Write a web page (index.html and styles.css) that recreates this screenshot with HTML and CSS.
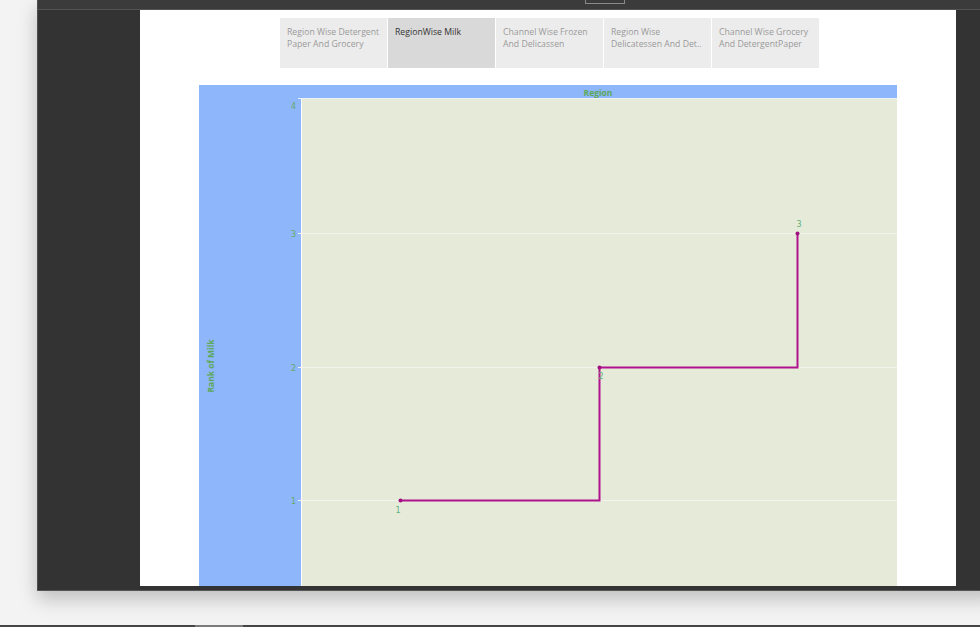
FILE: index.html
```html
<!DOCTYPE html>
<html>
<head>
<meta charset="utf-8">
<link rel="stylesheet" href="styles.css">
</head>
<body>
<div class="desk">
  <div class="window">
    <div class="titlebar"><span class="tabstub"></span></div>
    <div class="winbody">
      <div class="gutter"></div>
      <div class="panel">
        <div class="tabs">
          <div class="tab">Region Wise Detergent Paper And Grocery</div>
          <div class="tab active">RegionWise Milk</div>
          <div class="tab">Channel Wise Frozen And Delicassen</div>
          <div class="tab">Region Wise Delicatessen And Det..</div>
          <div class="tab">Channel Wise Grocery And DetergentPaper</div>
        </div>
        <div class="chart">
          <svg class="plot" width="698" height="501" viewBox="0 0 698 501">
            <rect x="0" y="0" width="698" height="501" fill="#8eb6fa"/>
            <rect x="103" y="14" width="595" height="487" fill="#e6ebd9"/>
            <line x1="102.5" y1="13" x2="102.5" y2="501" stroke="#ffffff" stroke-width="1"/>
            <line x1="99" y1="13.5" x2="698" y2="13.5" stroke="#eef2f6" stroke-width="1"/>
            <line x1="99" y1="148.5" x2="698" y2="148.5" stroke="#f2f2ee" stroke-width="1.2"/>
            <line x1="99" y1="282.5" x2="698" y2="282.5" stroke="#f2f2ee" stroke-width="1.2"/>
            <line x1="99" y1="415.5" x2="698" y2="415.5" stroke="#f2f2ee" stroke-width="1.2"/>
            <text class="hdr" x="399" y="11" text-anchor="middle">Region</text>
            <text class="hdr" transform="translate(15 281) rotate(-90)" text-anchor="middle">Rank of Milk</text>
            <text class="ytick" x="97" y="24" text-anchor="end">4</text>
            <text class="ytick" x="97" y="152" text-anchor="end">3</text>
            <text class="ytick" x="97" y="286" text-anchor="end">2</text>
            <text class="ytick" x="97" y="419" text-anchor="end">1</text>
            <polyline points="201.5,415.5 400.5,415.5 400.5,282.5 598.5,282.5 598.5,148.5" fill="none" stroke="#b0138e" stroke-width="2"/>
            <circle cx="201.5" cy="415.5" r="2" fill="#a0107f"/>
            <circle cx="400.5" cy="282.5" r="2" fill="#a0107f"/>
            <circle cx="598.5" cy="148.5" r="2" fill="#a0107f"/>
            <text class="plab" x="199" y="428" text-anchor="middle">1</text>
            <text class="plab" x="402" y="294" text-anchor="middle">2</text>
            <text class="plab" x="600" y="142" text-anchor="middle">3</text>
          </svg>
        </div>
      </div>
      <div class="gutter-r"></div>
    </div>
  </div>
  <div class="taskbar"><span class="taskseg"></span></div>
</div>
</body>
</html>
```

FILE: styles.css
```css
html, body {
  margin: 0;
  padding: 0;
  width: 980px;
  height: 627px;
  overflow: hidden;
  background: #f3f3f3;
  font-family: "Open Sans", "Noto Sans", sans-serif;
}

.desk {
  display: flex;
  flex-direction: column;
  height: 627px;
}

.window {
  margin-left: 37px;
  width: 960px;
  height: 591px;
  box-sizing: border-box;
  background: #333333;
  border-left: 1px solid #505050;
  border-bottom: 1px solid #555555;
  box-shadow: 0 8px 18px rgba(0, 0, 0, 0.22);
  display: flex;
  flex-direction: column;
}

.titlebar {
  height: 9px;
  background: #3b3b3b;
  border-bottom: 1px solid #545454;
  display: flex;
  align-items: flex-start;
  padding-left: 547px;
}

.tabstub {
  width: 38px;
  height: 3px;
  border: 1px solid #8a8a8a;
  border-top: none;
}

.winbody {
  display: flex;
  flex: 0 0 576px;
  height: 576px;
}

.gutter {
  width: 102px;
  flex: 0 0 102px;
}

.panel {
  width: 816px;
  flex: 0 0 816px;
  background: #ffffff;
  display: flex;
  flex-direction: column;
  overflow: hidden;
}

.gutter-r {
  flex: 1;
}

.tabs {
  display: flex;
  margin: 8px 0 0 140px;
  height: 50px;
  gap: 1px;
}

.tab {
  width: 107px;
  height: 50px;
  box-sizing: border-box;
  background: #ececec;
  padding: 8px 6px 0 7px;
  font-size: 8.7px;
  line-height: 12px;
  color: #9a9a9a;
  white-space: normal;
}

.tab.active {
  background: #d9d9d9;
  color: #333333;
}

.chart {
  margin: 17px 0 0 59px;
  width: 698px;
  height: 501px;
}

.plot {
  display: block;
}

.hdr {
  font-family: "Open Sans", "Noto Sans", sans-serif;
  font-size: 8.5px;
  font-weight: bold;
  fill: #5ea85b;
}

.ytick {
  font-family: "DejaVu Sans", sans-serif;
  font-size: 8px;
  fill: #66a866;
}

.plab {
  font-family: "DejaVu Sans", sans-serif;
  font-size: 8px;
  fill: #5fb07a;
}

.taskbar {
  margin-top: 34px;
  height: 2px;
  background: #454545;
  position: relative;
}

.taskseg {
  position: absolute;
  left: 195px;
  width: 48px;
  height: 2px;
  background: #7a7a7a;
}
```
